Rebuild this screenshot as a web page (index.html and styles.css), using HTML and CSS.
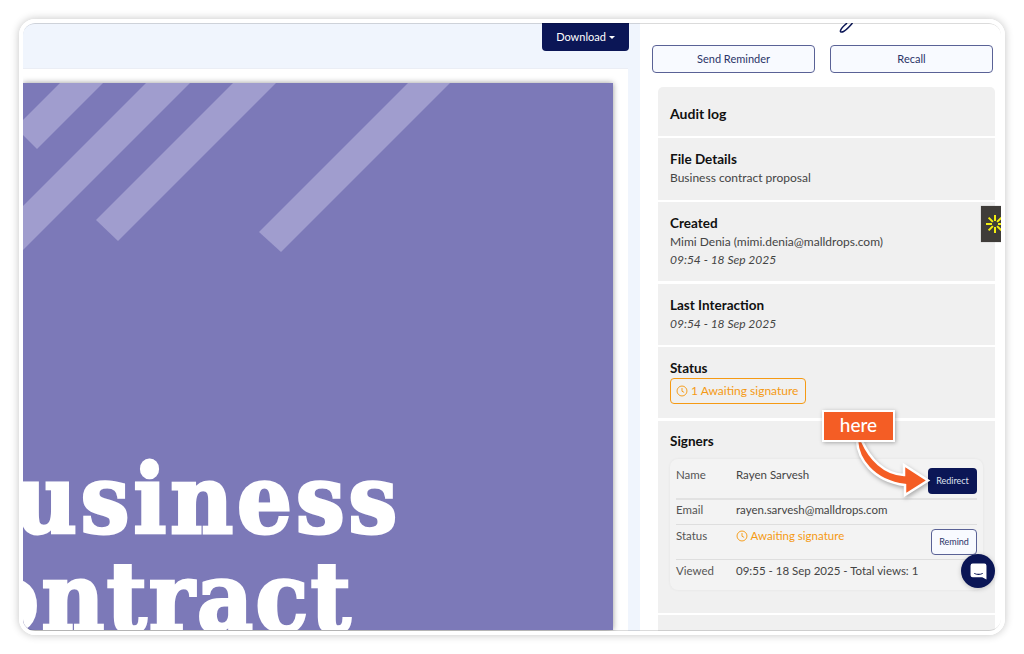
FILE: index.html
```html
<!DOCTYPE html>
<html lang="en">
<head>
<meta charset="utf-8">
<title>Document details</title>
<link rel="stylesheet" href="styles.css">
</head>
<body>
<div class="frame">
  <div class="inner">
    <section class="left">
      <div class="toolbar">
        <button class="download">Download<span class="caret"></span></button>
      </div>
      <div class="viewer">
        <div class="page">
          <svg class="stripes" viewBox="23 83 590 548" aria-hidden="true">
            <polygon points="60,83 103,83 37,149 23,135 23,120"/>
            <polygon points="146,83 190,83 23,250 23,206"/>
            <polygon points="233,83 276,83 118,241 96,220"/>
            <polygon points="408,83 450,83 281,252 259,232"/>
          </svg>
          <h1 class="title"><span class="line1">Business</span><span class="line2">Contract</span></h1>
        </div>
      </div>
    </section>
    <aside class="panel">
      <div class="sig">
        <svg width="16" height="10" viewBox="0 0 16 10" aria-hidden="true"><path d="M14.500 0C12 3 9 6.500 5.500 8.500C3.500 9.500 2 9 2.500 7.500C3.200 5 6 3 9 0" fill="none" stroke="#0b1656" stroke-width="1.500"/></svg>
      </div>
      <div class="actions">
        <button class="outline">Send Reminder</button>
        <button class="outline">Recall</button>
      </div>
      <div class="cards">
        <div class="card audit"><h2>Audit log</h2></div>
        <div class="card details"><h3>File Details</h3><p>Business contract proposal</p></div>
        <div class="card"><h3>Created</h3><p>Mimi Denia (mimi.denia@malldrops.com)</p><p class="when">09:54 - 18 Sep 2025</p></div>
        <div class="card"><h3>Last Interaction</h3><p class="when">09:54 - 18 Sep 2025</p></div>
        <div class="card status"><h3>Status</h3>
          <span class="badge">
            <svg class="clock" viewBox="0 0 14 14" aria-hidden="true"><circle cx="7" cy="7" r="5.800"/><path d="M7 3.500V7.300L9.500 8.600"/></svg>
            1 Awaiting signature</span>
        </div>
        <div class="card signers"><h3>Signers</h3>
          <div class="signer">
            <div class="row r1"><span class="k">Name</span><span class="v">Rayen Sarvesh</span><button class="redirect">Redirect</button></div>
            <div class="row r2"><span class="k">Email</span><span class="v">rayen.sarvesh@malldrops.com</span></div>
            <div class="row r3"><span class="k">Status</span><span class="v wait"><svg class="clock" viewBox="0 0 14 14" aria-hidden="true"><circle cx="7" cy="7" r="5.800"/><path d="M7 3.500V7.300L9.500 8.600"/></svg> Awaiting signature</span><button class="remind">Remind</button></div>
            <div class="row r4"><span class="k">Viewed</span><span class="v">09:55 - 18 Sep 2025 - Total views: 1</span></div>
          </div>
        </div>
        <div class="card rest"></div>
      </div>

      <div class="marker">
        <svg viewBox="0 0 20 36" width="20" height="36" aria-hidden="true">
          <g stroke="#f2ee12" stroke-width="2">
            <path d="M14 9V15M14 21V27M5 18H11M17 18H23M7.600 11.600L11.900 15.900M16.100 20.100L20.400 24.400M7.600 24.400L11.900 20.100M16.100 15.900L20.400 11.600"/>
          </g>
        </svg>
      </div>
      <svg class="arrow" viewBox="850 440 85 62" aria-hidden="true">
        <path d="M857 441C858 458 872 481 905 485V495L928 480.500L904 465V475C884 474 870 459 862 441Z" fill="#f45d25" stroke="#fff" stroke-width="2.500" stroke-linejoin="miter"/>
      </svg>
      <div class="here">here</div>
      <div class="chat">
        <svg viewBox="0 0 16 16" width="17" height="17" aria-hidden="true"><path d="M2.500 0.500H13.500A2 2 0 0 1 15.500 2.500V15.500L11.500 13.500H2.500A2 2 0 0 1 0.500 11.500V2.500A2 2 0 0 1 2.500 0.500Z" fill="#fff"/><path d="M4 9.800C6 11 10 11 12 9.800" fill="none" stroke="#0b1656" stroke-width="1"/></svg>
      </div>
    </aside>
  </div>
</div>
</body>
</html>
```
FILE: styles.css
```css
* { box-sizing: border-box; }
html, body { margin: 0; height: 100%; background: #fff; }
body {
  padding: 19px;
  overflow: hidden;
  font-family: "Lato", "Noto Sans", sans-serif;
  color: #444;
}
button { font-family: inherit; cursor: pointer; padding: 0; }

.frame {
  width: 986px;
  height: 616px;
  border: 4px solid #fff;
  border-radius: 16px;
  box-shadow: 0 0 9px rgba(0, 0, 0, .24);
}
.inner {
  position: relative;
  display: grid;
  grid-template-columns: 617px 361px;
  height: 608px;
  border-radius: 12px;
  overflow: hidden;
  background: #fff;
}
.inner::after {
  content: "";
  position: absolute;
  inset: 0;
  border-radius: 12px;
  border-top: 1px solid rgba(0, 0, 0, .14);
  border-bottom: 1px solid rgba(0, 0, 0, .14);
  pointer-events: none;
}

/* left: document viewer */
.left { background: #f0f5fd; display: flex; flex-direction: column; min-height: 0; }
.toolbar { height: 45px; flex: none; display: flex; justify-content: flex-end; align-items: flex-start; padding-right: 11px; }
.download {
  width: 87px; height: 28px;
  padding-bottom: 2px;
  background: #0b1656; color: #fff;
  border: 0; border-radius: 0 0 4px 4px;
  font-size: 11px;
}
.caret {
  display: inline-block;
  margin-left: 3px;
  vertical-align: 2px;
  border-left: 3px solid transparent;
  border-right: 3px solid transparent;
  border-top: 3px solid #fff;
}
.viewer {
  flex: 1; min-height: 0;
  width: 605px;
  padding-top: 15px;
  background: #fff;
  border-top: 1px solid #ebeef5;
}
.page {
  position: relative;
  width: 590px; height: 100%;
  margin-top: -1px;
  background: #7c79b8;
  overflow: hidden;
  box-shadow: 0 0 6px rgba(0, 0, 0, .4);
}
.stripes { position: absolute; left: 0; top: 0; width: 590px; height: 548px; fill: #a09dce; }
.title {
  position: relative;
  margin: 368px 0 0;
  color: #fff;
  font-family: "DejaVu Serif Condensed", "DejaVu Serif", serif;
  font-size: 96px;
  font-weight: 700;
  line-height: 98px;
  white-space: nowrap;
  -webkit-text-stroke: 3px #fff;
}
.line1, .line2 { display: block; }
.line1 { margin-left: -86px; letter-spacing: 4px; }
.line2 { margin-left: -113px; letter-spacing: 2.500px; }

/* right: details panel */
.panel { position: relative; background: #fff; display: flex; flex-direction: column; min-height: 0; overflow: hidden; }
.sig { height: 22px; flex: none; padding-left: 198px; line-height: 0; }
.actions { display: flex; gap: 15px; padding: 0 8px 0 12px; flex: none; }
.outline {
  flex: 1; height: 28px;
  padding-bottom: 2px;
  background: #f8faff;
  border: 1px solid #5a6296;
  border-radius: 4px;
  color: #2b3468;
  font-size: 11px;
}
.cards { margin: 14px 6px 0 18px; display: flex; flex-direction: column; gap: 2.500px; }
.card { background: #f0f0f0; padding: 12px; flex: none; }
.audit { height: 48.500px; display: flex; align-items: center; border-radius: 5px 5px 0 0; padding: 4px 12px 0; }
.details { height: 61.500px; }
.card h2, .card h3 { margin: 0; color: #111; font-weight: 700; }
.card h2 { font-size: 14px; }
.card h3 { font-size: 13.500px; line-height: 19px; }
.card p { margin: 0; font-size: 12px; line-height: 18px; color: #444; }
.card .when { font-style: italic; }

.clock { width: 12px; height: 12px; fill: none; stroke: currentColor; stroke-width: 1.100; vertical-align: -2px; }
.status { height: 71px; }
.badge {
  display: inline-block;
  width: 136px; height: 26px;
  padding-left: 5px;
  border: 1.500px solid #f59a14;
  border-radius: 4px;
  color: #f59a14;
  font-size: 12px;
  line-height: 24px;
  white-space: nowrap;
}
.signers { height: 192px; padding-top: 11px; }
.signer {
  margin-top: 8px;
  width: 313px; height: 131px;
  padding: 0 6px;
  background: #f3f3f3;
  border-radius: 8px;
  box-shadow: 0 0 3px rgba(0, 0, 0, .06);
}
.row { display: flex; align-items: flex-start; font-size: 11.500px; line-height: 18px; border-bottom: 1px solid #dedede; }
.row .k { width: 60px; flex: none; color: #555; }
.row .v { flex: 1; color: #444; white-space: nowrap; }
.r1 { height: 41px; padding-top: 7px; border-bottom-width: 2px; border-bottom-color: #e2e2e2; }
.r2 { height: 25px; padding-top: 1px; }
.r3 { height: 35px; padding-top: 2px; }
.r4 { padding-top: 2px; border-bottom: 0; }
.wait { color: #f59a14 !important; }
.redirect {
  width: 49px; height: 26px; margin-top: 2px;
  background: #0b1656; color: #dfe2f0;
  border: 0; border-radius: 4px;
  font-size: 9px;
}
.remind {
  width: 46px; height: 26px; margin-top: 2px;
  padding-bottom: 1px;
  background: #f8faff; color: #2b3468;
  border: 1px solid #5a6296; border-radius: 4px;
  font-size: 9px;
}
.rest { height: 20px; padding: 0; }

/* overlays */
.marker { position: absolute; left: 341px; top: 183px; width: 20px; height: 36px; background: #3f3c39; overflow: hidden; box-shadow: 0 0 1px rgba(0,0,0,.4); }
.arrow { position: absolute; left: 210px; top: 417px; width: 85px; height: 62px; filter: drop-shadow(1px 2px 2px rgba(0,0,0,.3)); }
.here {
  position: absolute; left: 182px; top: 387px;
  width: 73px; height: 32px;
  background: #f45d25; color: #fff;
  border: 2px solid #fff;
  box-shadow: 1px 1px 4px rgba(0, 0, 0, .3);
  font-size: 19px;
  font-weight: 500;
  line-height: 25px;
  text-align: center;
}
.chat {
  position: absolute; left: 321px; top: 531px;
  width: 34px; height: 34px;
  border-radius: 50%;
  background: #0b1656;
  display: flex; align-items: center; justify-content: center;
  box-shadow: 0 1px 5px rgba(0, 0, 0, .2);
}
```
